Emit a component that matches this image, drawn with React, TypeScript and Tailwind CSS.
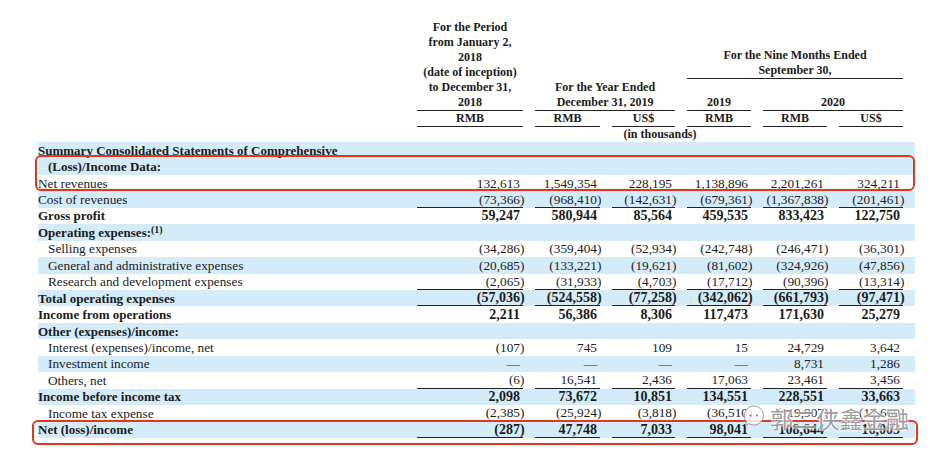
import React from 'react';

type Row = {
  label: React.ReactNode;
  vals?: string[];
  bold?: boolean;
  indent?: boolean;
  line?: boolean;
};

const rows: Row[] = [
  { label: 'Summary Consolidated Statements of Comprehensive', bold: true },
  { label: '(Loss)/Income Data:', bold: true, indent: true },
  { label: 'Net revenues', vals: ['132,613', '1,549,354', '228,195', '1,138,896', '2,201,261', '324,211'] },
  {
    label: 'Cost of revenues',
    vals: ['(73,366)', '(968,410)', '(142,631)', '(679,361)', '(1,367,838)', '(201,461)'],
    line: true,
  },
  { label: 'Gross profit', bold: true, vals: ['59,247', '580,944', '85,564', '459,535', '833,423', '122,750'] },
  {
    label: (
      <>
        Operating expenses:<sup className="text-[10px] relative -top-[2px]">(1)</sup>
      </>
    ),
    bold: true,
  },
  {
    label: 'Selling expenses',
    indent: true,
    vals: ['(34,286)', '(359,404)', '(52,934)', '(242,748)', '(246,471)', '(36,301)'],
  },
  {
    label: 'General and administrative expenses',
    indent: true,
    vals: ['(20,685)', '(133,221)', '(19,621)', '(81,602)', '(324,926)', '(47,856)'],
  },
  {
    label: 'Research and development expenses',
    indent: true,
    vals: ['(2,065)', '(31,933)', '(4,703)', '(17,712)', '(90,396)', '(13,314)'],
    line: true,
  },
  {
    label: 'Total operating expenses',
    bold: true,
    vals: ['(57,036)', '(524,558)', '(77,258)', '(342,062)', '(661,793)', '(97,471)'],
    line: true,
  },
  { label: 'Income from operations', bold: true, vals: ['2,211', '56,386', '8,306', '117,473', '171,630', '25,279'] },
  { label: 'Other (expenses)/income:', bold: true },
  { label: 'Interest (expenses)/income, net', indent: true, vals: ['(107)', '745', '109', '15', '24,729', '3,642'] },
  { label: 'Investment income', indent: true, vals: ['—', '—', '—', '—', '8,731', '1,286'] },
  { label: 'Others, net', indent: true, vals: ['(6)', '16,541', '2,436', '17,063', '23,461', '3,456'], line: true },
  { label: 'Income before income tax', bold: true, vals: ['2,098', '73,672', '10,851', '134,551', '228,551', '33,663'] },
  {
    label: 'Income tax expense',
    indent: true,
    vals: ['(2,385)', '(25,924)', '(3,818)', '(36,510)', '(119,907)', '(17,660)'],
    line: true,
  },
  { label: 'Net (loss)/income', bold: true, vals: ['(287)', '47,748', '7,033', '98,041', '108,644', '16,003'], line: true },
];

const grid = 'grid grid-cols-[367px_106px_65px_63px_64px_64px_64px] gap-x-3';

const Num = ({ v }: { v: string }) => {
  if (v.endsWith(')')) {
    return (
      <>
        {v.slice(0, -1)}
        <span className="inline-block w-0">)</span>
      </>
    );
  }
  return <>{v}</>;
};

const App = () => {
  return (
    <div
      className="relative w-[941px] h-[462px] overflow-hidden bg-white text-[#1b1b1b]"
      style={{ fontFamily: '"Liberation Serif", "Times New Roman", serif' }}
    >
      {/* column headings */}
      <div className={`${grid} ml-[38px] pr-3 pt-[20px] text-[12px] leading-[15px] font-bold text-center`}>
        <div className="col-start-2 border-b border-[#222]">
          For the Period
          <br />
          from January 2,
          <br />
          2018
          <br />
          (date of inception)
          <br />
          to December 31,
          <br />
          2018
        </div>
        <div className="col-span-2 self-end border-b border-[#222]">
          For the Year Ended
          <br />
          December 31, 2019
        </div>
        <div className="col-span-3 self-end">
          <div className="border-b border-[#222]">
            For the Nine Months Ended
            <br />
            September 30,
          </div>
          <div className="grid grid-cols-[64px_140px] gap-x-3 mt-[16px]">
            <div className="border-b border-[#222]">2019</div>
            <div className="border-b border-[#222]">2020</div>
          </div>
        </div>

        <div className="col-start-2 border-b border-[#222]">RMB</div>
        <div className="border-b border-[#222]">RMB</div>
        <div className="border-b border-[#222]">US$</div>
        <div className="border-b border-[#222]">RMB</div>
        <div className="border-b border-[#222]">RMB</div>
        <div className="border-b border-[#222]">US$</div>

        <div className="col-start-2 col-span-6">(in thousands)</div>
      </div>

      {/* statement rows */}
      <div className="ml-[38px] w-[877px]">
        {rows.map((r, i) => {
          const blue = i < 2 || i % 2 === 1;
          return (
            <div
              key={i}
              className={`${grid} grid-rows-[16.45px] pr-3 h-[16.45px] leading-[15px] ${
                blue ? 'bg-[#d4ecfa]' : 'bg-white'
              }`}
            >
              <div
                className={`flex items-center whitespace-nowrap ${r.indent ? 'pl-[10px]' : ''} ${
                  r.bold ? 'font-bold text-[13px]' : 'text-[13.3px]'
                }`}
              >
                {r.label}
              </div>
              {r.vals?.map((v, j) => (
                <div
                  key={j}
                  className={`flex items-center justify-end pr-[3px] whitespace-nowrap ${
                    r.bold ? 'font-bold text-[14px]' : 'text-[13.3px]'
                  } ${r.line ? 'border-b border-[#222]' : ''}`}
                >
                  <span>
                    <Num v={v} />
                  </span>
                </div>
              ))}
            </div>
          );
        })}
      </div>

      {/* highlight boxes */}
      <div className="absolute left-[35px] top-[155px] w-[880px] h-[36px] rounded-[6px] border-[2.5px] border-[#e3361f]" />
      <div className="absolute left-[32px] top-[420px] w-[886px] h-[25px] rounded-[6px] border-[2.5px] border-[#e3361f]" />

      {/* watermark */}
      <div className="absolute left-[743px] top-[404px] flex items-center gap-[5px]">
        <svg width="22" height="28" viewBox="0 0 22 28">
          <path
            d="M11 2a9.5 9.5 0 1 1-5.2 17.5L2.5 22l1.2-4.3A9.5 9.5 0 0 1 11 2z"
            fill="#fff"
            fillOpacity="0.85"
            stroke="#9a9a9a"
            strokeWidth="1"
          />
          <circle cx="7.5" cy="11.5" r="1.1" fill="#888" />
          <circle cx="14" cy="11.5" r="1.1" fill="#888" />
        </svg>
        <span
          className="text-[23px] leading-none tracking-[0.2px] text-[#8a8a8a]/85 [text-shadow:0_0_2px_#fff,0_0_2px_#fff,0_0_3px_#fff]"
          style={{ fontFamily: '"Noto Sans CJK SC", sans-serif' }}
        >
          郭二侠鑫金融
        </span>
      </div>
    </div>
  );
};

export default App;
